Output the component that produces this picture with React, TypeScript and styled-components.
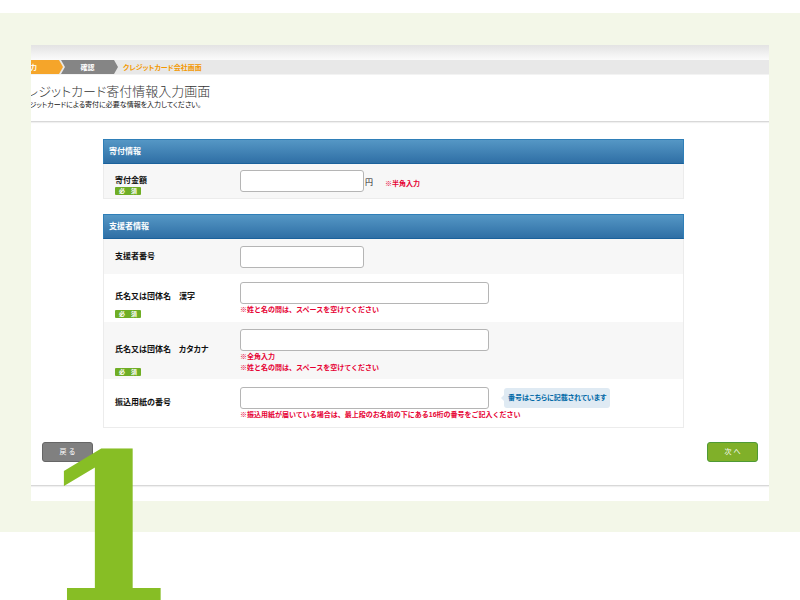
import React from "react";
import styled, { createGlobalStyle, css } from "styled-components";

const GlobalStyle = createGlobalStyle`
  *, *::before, *::after { box-sizing: border-box; }
  body {
    margin: 0;
    background: #fff;
    color: #222;
    font-family: "Liberation Sans", "Noto Sans CJK JP", sans-serif;
    font-size: 8px;
    line-height: 12px;
  }
`;

const Page = styled.div`
  position: relative;
  min-height: 100vh;
  padding-top: 13px;
  overflow: hidden;
`;

const Band = styled.section`
  padding: 32px 31px 31px;
  background: #f3f7e8;
`;

const Screen = styled.main`
  background: #fff;
  overflow: hidden;
  padding-bottom: 15px;
`;

const TopShade = styled.div`
  height: 15px;
  background: linear-gradient(#e3e3e3, #fbfbfb);
`;

const Steps = styled.ol`
  display: flex;
  align-items: center;
  height: 15px;
  margin: 0;
  padding: 0;
  list-style: none;
  background: #e8e8e8;
  border-bottom: 1px solid #f3f3f3;
  font-family: "Noto Sans CJK JP", sans-serif;
  font-size: 7px;
  font-weight: 700;
  line-height: 14px;
  white-space: nowrap;
`;

const StepItem = styled.li<{ $tone: "active" | "next" | "last" }>`
  height: 14px;
  ${({ $tone }) =>
    $tone === "active" &&
    css`
      width: 32px;
      background: #f5a52a;
      color: #fff;
      text-indent: -8px;
      clip-path: polygon(0 0, 28px 0, 100% 50%, 28px 100%, 0 100%);
    `}
  ${({ $tone }) =>
    $tone === "next" &&
    css`
      width: 57px;
      margin-left: -2px;
      background: #858585;
      color: #fff;
      text-align: center;
      padding-right: 4px;
      clip-path: polygon(0 0, 53px 0, 100% 50%, 53px 100%, 0 100%, 4px 50%);
    `}
  ${({ $tone }) =>
    $tone === "last" &&
    css`
      padding-left: 5px;
      color: #f39800;
      font-feature-settings: "palt";
    `}
`;

const Intro = styled.header`
  padding: 7px 0 10px;
  border-bottom: 1px solid #d8d8d8;
  box-shadow: 0 1px 1px #f0f0f0;
  white-space: nowrap;
  font-feature-settings: "palt";
`;

const Title = styled.h1`
  margin: 0 0 0 -16px;
  color: #333;
  font-family: "Noto Sans CJK JP", sans-serif;
  font-size: 13px;
  font-weight: 300;
  line-height: 17px;
`;

const Lead = styled.p`
  margin: 0 0 0 -14px;
  color: #111;
  font-size: 7px;
`;

const Form = styled.form`
  margin: 0;
`;

const Panels = styled.div`
  display: grid;
  gap: 15px;
  margin: 17px 85px 14px 72px;
`;

const Panel = styled.section``;

const PanelTitle = styled.h2`
  margin: 0;
  padding: 0 5px;
  border: 1px solid #2f7fb8;
  border-bottom-color: #1b619b;
  background: linear-gradient(#5597c5, #2f6fa5);
  color: #fff;
  font-size: 8px;
  font-weight: 700;
  line-height: 23px;
`;

const Rows = styled.div`
  border: 1px solid #ececec;
  border-top: 0;
`;

const Row = styled.div<{ $shade?: boolean; $top?: number; $bottom?: number }>`
  display: grid;
  grid-template-columns: 125px 1fr;
  align-items: start;
  padding: ${({ $top = 7 }) => $top}px 0 ${({ $bottom = 3 }) => $bottom}px 11px;
  background: ${({ $shade }) => ($shade ? "#f7f7f7" : "#fff")};
`;

const Caption = styled.div<{ $top: number; $gap?: number }>`
  display: flex;
  flex-direction: column;
  align-items: flex-start;
  gap: ${({ $gap = 0 }) => $gap}px;
  padding-top: ${({ $top }) => $top}px;
`;

const Label = styled.label`
  color: #111;
  font-weight: 700;
  font-feature-settings: "palt";
  white-space: pre;
`;

const Required = styled.span`
  width: 26px;
  height: 8px;
  border-radius: 1px;
  background: #6fae25;
  color: #fff;
  font-size: 6px;
  font-weight: 700;
  line-height: 8px;
  text-align: center;
  white-space: pre;
`;

const Field = styled.div`
  display: flex;
  align-items: center;
`;

const TextInput = styled.input<{ $wide?: boolean }>`
  display: block;
  width: ${({ $wide }) => ($wide ? 249 : 124)}px;
  height: 22px;
  padding: 0 4px;
  border: 1px solid #b5b5b5;
  border-radius: 3px;
  background: #fff;
  font: inherit;
`;

const Unit = styled.span`
  padding: 4px 0 0 1px;
`;

const Note = styled.p<{ $inline?: boolean }>`
  margin: ${({ $inline }) => ($inline ? "4px 0 0 12px" : "0")};
  color: #e60033;
  font-size: 7px;
  font-weight: 700;
  line-height: 11px;
  white-space: nowrap;
`;

const Hint = styled.a`
  position: relative;
  margin-left: 15px;
  padding: 0 4px;
  border-radius: 3px;
  background: #dfeaf3;
  color: #0068a6;
  font-size: 7px;
  font-weight: 700;
  font-feature-settings: "palt";
  line-height: 20px;
  text-decoration: none;
  white-space: nowrap;

  &::before {
    content: "";
    position: absolute;
    left: -3px;
    top: 7px;
    border: solid transparent;
    border-width: 3px 3px 3px 0;
    border-right-color: #dfeaf3;
  }
`;

const Actions = styled.div`
  display: flex;
  justify-content: space-between;
  padding: 0 11px 23px;
  border-bottom: 1px solid #d8d8d8;
  box-shadow: 0 1px 1px #f0f0f0;
`;

const ActionButton = styled.button<{ $primary?: boolean }>`
  width: 51px;
  height: 20px;
  padding: 0;
  border: 1px solid ${({ $primary }) => ($primary ? "#4f9a35" : "#666")};
  border-radius: 3px;
  background: ${({ $primary }) => ($primary ? "#80b029" : "#808080")};
  color: #fff;
  font: inherit;
  font-size: 7px;
  white-space: pre;
`;

const StepNumber = styled.strong`
  position: absolute;
  left: 39px;
  top: 426px;
  color: #87be25;
  font-family: "DejaVu Serif", serif;
  font-size: 204px;
  font-weight: 700;
  line-height: 204px;
  pointer-events: none;
`;

export default function App() {
  return (
    <Page lang="ja">
      <GlobalStyle />
      <Band>
        <Screen>
          <TopShade />
          <Steps>
            <StepItem $tone="active">入力</StepItem>
            <StepItem $tone="next">確認</StepItem>
            <StepItem $tone="last">クレジットカード会社画面</StepItem>
          </Steps>
          <Intro>
            <Title>クレジットカード寄付情報入力画面</Title>
            <Lead>クレジットカードによる寄付に必要な情報を入力してください。</Lead>
          </Intro>
          <Form onSubmit={(e) => e.preventDefault()}>
            <Panels>
              <Panel>
                <PanelTitle>寄付情報</PanelTitle>
                <Rows>
                  <Row $shade $top={6}>
                    <Caption $top={5}>
                      <Label htmlFor="amount">寄付金額</Label>
                      <Required>必　須</Required>
                    </Caption>
                    <Field>
                      <TextInput id="amount" />
                      <Unit>円</Unit>
                      <Note $inline>※半角入力</Note>
                    </Field>
                  </Row>
                </Rows>
              </Panel>
              <Panel>
                <PanelTitle>支援者情報</PanelTitle>
                <Rows>
                  <Row $shade $bottom={6}>
                    <Caption $top={5}>
                      <Label htmlFor="supporter">支援者番号</Label>
                    </Caption>
                    <TextInput id="supporter" />
                  </Row>
                  <Row $top={8} $bottom={4}>
                    <Caption $top={9} $gap={7}>
                      <Label htmlFor="kanji">氏名又は団体名　漢字</Label>
                      <Required>必　須</Required>
                    </Caption>
                    <div>
                      <TextInput id="kanji" $wide />
                      <Note>※姓と名の間は、スペースを空けてください</Note>
                    </div>
                  </Row>
                  <Row $shade>
                    <Caption $top={15} $gap={12}>
                      <Label htmlFor="kana">氏名又は団体名　カタカナ</Label>
                      <Required>必　須</Required>
                    </Caption>
                    <div>
                      <TextInput id="kana" $wide />
                      <Note>※全角入力</Note>
                      <Note>※姓と名の間は、スペースを空けてください</Note>
                    </div>
                  </Row>
                  <Row $top={8} $bottom={7}>
                    <Caption $top={10}>
                      <Label htmlFor="slip">振込用紙の番号</Label>
                    </Caption>
                    <div>
                      <Field>
                        <TextInput id="slip" $wide />
                        <Hint href="#slip">番号はこちらに記載されています</Hint>
                      </Field>
                      <Note>
                        ※振込用紙が届いている場合は、最上段のお名前の下にある16桁の番号をご記入ください
                      </Note>
                    </div>
                  </Row>
                </Rows>
              </Panel>
            </Panels>
            <Actions>
              <ActionButton type="button">戻 る</ActionButton>
              <ActionButton type="submit" $primary>
                次 へ
              </ActionButton>
            </Actions>
          </Form>
        </Screen>
      </Band>
      <StepNumber>1</StepNumber>
    </Page>
  );
}
